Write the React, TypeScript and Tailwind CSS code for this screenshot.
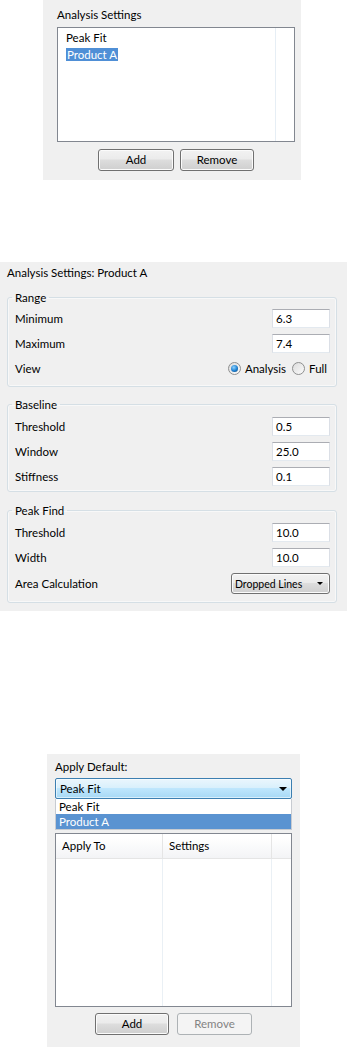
import React from "react";

const BTN =
  "flex items-center justify-center rounded-[3px] border border-[#707070] bg-[linear-gradient(#f2f2f2,#ebebeb_45%,#dddddd_50%,#cfcfcf)] shadow-[inset_0_0_0_1px_#fbfbfb] text-black";

const INPUT =
  "flex h-[19px] w-[58px] items-center border border-t-[#abadb3] border-x-[#dbdfe6] border-b-[#e3e9ef] bg-white pl-[3px]";

function Field({ label, value }: { label: string; value: string }) {
  return (
    <div className="flex h-[19px] items-center justify-between">
      <span>{label}</span>
      <div className={INPUT}>{value}</div>
    </div>
  );
}

function Radio({ checked, label }: { checked?: boolean; label: string }) {
  return (
    <div className="flex items-center gap-[4px]">
      <span className="flex h-[13px] w-[13px] items-center justify-center rounded-full border border-[#8e8f8f] bg-[linear-gradient(135deg,#dcdcdc,#fbfbfb)]">
        {checked && (
          <span className="h-[7px] w-[7px] rounded-full bg-[radial-gradient(circle_at_40%_35%,#8fd3ff,#1c7fd0_55%,#0d3b69)]" />
        )}
      </span>
      <span>{label}</span>
    </div>
  );
}

function Group({
  title,
  className,
  children,
}: {
  title: string;
  className: string;
  children: React.ReactNode;
}) {
  return (
    <fieldset
      className={`rounded-[3px] border border-[#d5dfe5] pl-[7px] pr-[6px] shadow-[inset_0_0_0_1px_#ffffff80] ${className}`}
    >
      <legend className="-ml-[3px] px-[3px] leading-[15px]">{title}</legend>
      <div className="flex flex-col gap-[6px]">{children}</div>
    </fieldset>
  );
}

export default function App() {
  return (
    <div
      className="w-[347px] bg-white text-[11.5px] leading-[16px] text-black"
      style={{ fontFamily: "Lato, 'Noto Sans', sans-serif" }}
    >
      {/* settings list */}
      <div className="ml-[43px] h-[180px] w-[258px] bg-[#f0f0f0] pl-[14px] pt-[7px]">
        <div className="h-[16px]">Analysis Settings</div>
        <div className="mt-[4px] h-[115px] w-[238px] border border-[#828790] bg-white">
          <div className="h-full w-[218px] border-r border-[#e6eef5] pt-[2px] pl-[8px]">
            <div className="h-[16px]">Peak Fit</div>
            <div className="flex h-[16px] items-center">
              <span className="bg-[#4f8fd6] px-[1px] leading-[13px] text-white">Product A</span>
            </div>
          </div>
        </div>
        <div className="mt-[7px] flex w-[238px] justify-center gap-[6px]">
          <button className={`${BTN} h-[22px] w-[76px]`}>Add</button>
          <button className={`${BTN} h-[22px] w-[74px]`}>Remove</button>
        </div>
      </div>

      {/* settings detail */}
      <div className="mt-[82px] w-[347px] bg-[#f0f0f0] pl-[7px] pr-[10px] pt-[3px] pb-[8px]">
        <div className="h-[16px]">Analysis Settings: Product A</div>

        <Group title="Range" className="mt-[9px] pt-[4px] pb-[8px]">
          <Field label="Minimum" value="6.3" />
          <Field label="Maximum" value="7.4" />
          <div className="flex h-[19px] items-center justify-between">
            <span>View</span>
            <div className="flex items-center gap-[6px] pr-[3px]">
              <Radio checked label="Analysis" />
              <Radio label="Full" />
            </div>
          </div>
        </Group>

        <Group title="Baseline" className="mt-[10px] pt-[5px] pb-[5px]">
          <Field label="Threshold" value="0.5" />
          <Field label="Window" value="25.0" />
          <Field label="Stiffness" value="0.1" />
        </Group>

        <Group title="Peak Find" className="mt-[11px] pt-[5px] pb-[8px]">
          <Field label="Threshold" value="10.0" />
          <Field label="Width" value="10.0" />
          <div className="flex h-[21px] items-center justify-between">
            <span>Area Calculation</span>
            <div className="flex h-[21px] w-[99px] items-center rounded-[3px] border border-[#707070] bg-[linear-gradient(#f2f2f2,#ebebeb_45%,#dddddd_50%,#cfcfcf)] pl-[3px] pr-[6px] text-[10.5px] shadow-[inset_0_0_0_1px_#fbfbfb]">
              <span>Dropped Lines</span>
              <span className="ml-auto h-0 w-0 border-x-[3px] border-t-[3px] border-x-transparent border-t-black" />
            </div>
          </div>
        </Group>
      </div>

      {/* apply default */}
      <div className="ml-[47px] mt-[143px] h-[293px] w-[253px] bg-[#f0f0f0] px-[8px] pt-[5px]">
        <div className="h-[16px]">Apply Default:</div>
        <div className="mt-[3px] flex h-[21px] items-center justify-between rounded-[2px] border border-[#3c7fb1] bg-[linear-gradient(#eaf6fd,#d9f0fc_45%,#bee6fd_50%,#a7d9f5)] pl-[4px] pr-[4px] shadow-[inset_0_0_0_1px_#ffffff90]">
          <span>Peak Fit</span>
          <span className="h-0 w-0 border-x-[4px] border-t-[4px] border-x-transparent border-t-black" />
        </div>
        <div className="border-x border-b border-[#c7cbd1] bg-white">
          <div className="h-[15px] pl-[3px] leading-[15px]">Peak Fit</div>
          <div className="h-[15px] bg-[#5a93d1] pl-[3px] leading-[15px] text-white">Product A</div>
        </div>
        <div className="mt-[3px] flex h-[174px] flex-col border border-[#828790] bg-white">
          <div className="flex h-[25px] border-b border-[#e5e5e5] bg-[linear-gradient(#ffffff,#ffffff_15%,#f3f4f6)]">
            <div className="flex w-[107px] items-center border-r border-[#e5e5e5] pl-[6px]">Apply To</div>
            <div className="flex w-[109px] items-center border-r border-[#e5e5e5] pl-[6px]">Settings</div>
            <div className="flex-1" />
          </div>
          <div className="flex flex-1">
            <div className="w-[107px] border-r border-[#eaf0f5]" />
            <div className="w-[109px] border-r border-[#eaf0f5]" />
            <div className="flex-1" />
          </div>
        </div>
        <div className="mt-[6px] flex justify-center gap-[8px]">
          <button className={`${BTN} h-[22px] w-[74px]`}>Add</button>
          <button className="flex h-[22px] w-[75px] items-center justify-center rounded-[3px] border border-[#adb2b5] bg-[#f4f4f4] text-[#838383]">
            Remove
          </button>
        </div>
      </div>
    </div>
  );
}
